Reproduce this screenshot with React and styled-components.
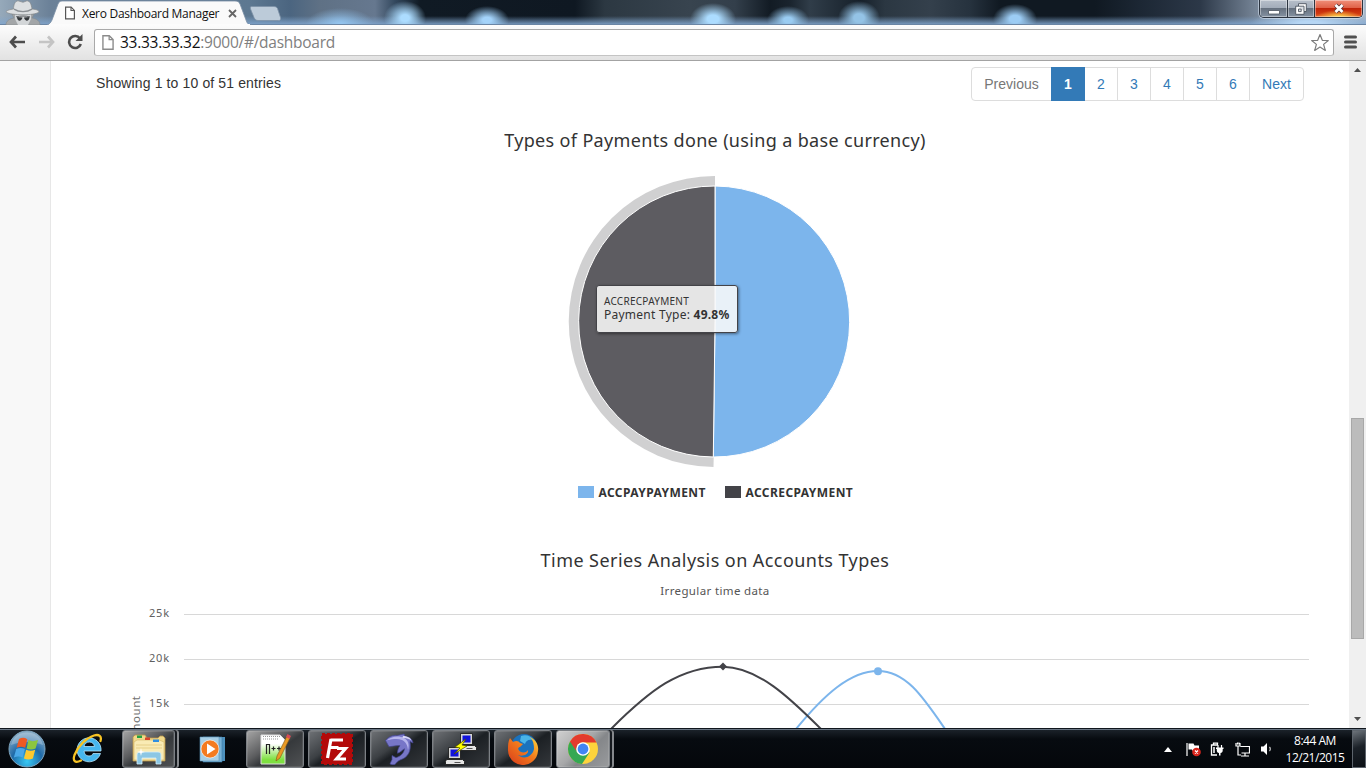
import React from "react";
import styled, { createGlobalStyle, css } from "styled-components";

const GlobalStyle = createGlobalStyle`
  * { box-sizing: border-box; }
  html, body { margin: 0; height: 100%; overflow: hidden; background: #fff; }
  svg { display: block; flex: none; }
`;

const chartFont = `"Noto Sans", "Open Sans", sans-serif`;
const systemFont = `"Open Sans", "Noto Sans", sans-serif`;

const Screen = styled.div`
  display: grid;
  grid-template-rows: 25px 36px 667px 40px;
  width: 1366px;
  height: 768px;
  overflow: hidden;
`;

/* ---------- Title bar ---------- */

const TitleBar = styled.header`
  display: flex;
  align-items: flex-start;
  overflow: hidden;
  box-shadow: inset 0 -1px 0 #6b86a5;
  background:
    radial-gradient(ellipse 21px 17px at 405px 18px, #acdcff 20%, rgba(172, 220, 255, 0.6) 55%, transparent 100%),
    radial-gradient(ellipse 22px 14px at 487px 20px, #a4d3fa 20%, rgba(160, 208, 248, 0.6) 55%, transparent 100%),
    radial-gradient(ellipse 23px 16px at 713px 19px, #acdcff 25%, rgba(172, 220, 255, 0.6) 55%, transparent 100%),
    radial-gradient(ellipse 21px 14px at 788px 20px, #9accf2 20%, rgba(154, 204, 242, 0.55) 55%, transparent 100%),
    radial-gradient(ellipse 21px 17px at 859px 18px, #94c3e6 25%, rgba(148, 195, 230, 0.6) 55%, transparent 100%),
    radial-gradient(ellipse 22px 15px at 1015px 19px, #9cccf4 25%, rgba(156, 204, 244, 0.6) 55%, transparent 100%),
    radial-gradient(ellipse 34px 16px at 340px 24px, #93c4ee 5%, transparent 100%),
    radial-gradient(ellipse 60px 14px at 1310px 24px, #b6d6f4 20%, transparent 100%),
    linear-gradient(to bottom, transparent 16px, rgba(128, 165, 205, 0.85) 24px),
    linear-gradient(to right, #96a9ba 0, #6b8198 50px, #5d7891 250px, #4b6580 290px, #5f7185 320px,
      #66788f 375px, #33485e 395px, #101a24 420px, #0f1822 575px, #2c3842 605px, #38444f 690px,
      #333f4b 735px, #121b24 770px, #1a242e 790px, #303d49 810px, #16202a 860px, #2b3742 885px,
      #34404c 930px, #26323e 970px, #101922 1000px, #101922 1095px, #1c2734 1140px, #2c3848 1200px, #7b8a9c 1260px,
      #a9b9ca 1366px);
`;

const Incognito = styled.div`
  width: 47px;
  padding-left: 5px;
`;

const Tab = styled.div`
  position: relative;
  width: 205px;
  height: 25px;
  padding: 6px 0 0 18px;
  display: flex;
  align-items: flex-start;
`;

const TabShape = styled.svg`
  position: absolute;
  inset: 0;
`;

const TabIcon = styled.span`
  position: relative;
  margin-top: ${(p) => p.$drop || 0}px;
`;

const TabLabel = styled.span`
  position: relative;
  flex: none;
  width: 153px;
  padding-left: 7px;
  font: 12px/15px ${systemFont};
  letter-spacing: -0.29px;
  white-space: nowrap;
  color: #111;
`;

const NewTab = styled.svg`
  margin: 6px 0 0 -3px;
`;

const WindowControls = styled.div`
  display: flex;
  height: 18px;
  margin: 0 3px 0 auto;
  border: 1px solid #2b3440;
  border-top: 0;
  border-radius: 0 0 5px 5px;
  box-shadow: 0 0 0 1px rgba(220, 232, 245, 0.55), 24px 0 8px -18px #ff6a4d;
  overflow: hidden;
`;

const WindowButton = styled.div`
  width: ${(p) => p.$w}px;
  display: grid;
  place-items: center;
  border-left: ${(p) => (p.$first ? 0 : "1px solid #2b3440")};
  box-shadow: inset 0 0 0 1px rgba(255, 255, 255, 0.4);
  background: ${(p) =>
    p.$danger
      ? "radial-gradient(ellipse 22px 7px at 50% 100%, #ffd94e, transparent), linear-gradient(#f0907a 0, #e06248 45%, #c02408 50%, #d03a12 80%, #ea6a2c 100%)"
      : "linear-gradient(#b7bfca 0, #a3adba 45%, #66717f 50%, #8592a2 100%)"};
`;

/* ---------- Toolbar ---------- */

const Toolbar = styled.nav`
  display: flex;
  align-items: center;
  padding: 0 8px 1px 8px;
  background: linear-gradient(#fcfcfc, #e2e2e2);
  border-bottom: 1px solid #a3a3a3;
`;

const NavIcon = styled.svg`
  margin-right: ${(p) => p.$gap}px;
`;

const AddressBar = styled.div`
  display: flex;
  align-items: center;
  width: 1240px;
  height: 27px;
  padding: 0 3px 0 7px;
  background: #fff;
  border: 1px solid #a9a9a9;
  border-bottom-color: #c4c4c4;
  border-radius: 3px;
`;

const Url = styled.span`
  flex: 1;
  padding-left: 6px;
  font: 15.5px/24px ${systemFont};
  letter-spacing: -0.26px;
  color: #808080;
  b { font-weight: 400; color: #111; }
`;

/* ---------- Page ---------- */

const Viewport = styled.div`
  display: grid;
  grid-template-columns: 51px 1298px 17px;
  min-height: 0;
  overflow: hidden;
`;

const SideGutter = styled.aside`
  background: #f8f8f8;
  border-right: 1px solid #e7e7e7;
`;

const Main = styled.main`
  overflow: hidden;
  min-width: 0;
`;

const TableFooter = styled.div`
  display: flex;
  justify-content: space-between;
  height: 68px;
  padding: 6px 45px 0;
  font: 14px/20px "Liberation Sans", Arial, sans-serif;
  color: #333;
`;

const EntryInfo = styled.div`
  padding-top: 6px;
  letter-spacing: 0.13px;
`;

const Pager = styled.div`
  display: flex;
  height: 34px;
`;

const PageLink = styled.a`
  flex: none;
  width: ${(p) => p.$w}px;
  padding: 6px 0;
  margin-left: -1px;
  border: 1px solid #ddd;
  text-align: center;
  white-space: nowrap;
  color: ${(p) => (p.$muted ? "#777" : "#337ab7")};
  &:first-child { border-radius: 4px 0 0 4px; margin-left: 0; }
  &:last-child { border-radius: 0 4px 4px 0; }
  ${(p) =>
    p.$active &&
    css`
      position: relative;
      background: #337ab7;
      border-color: #337ab7;
      color: #fff;
      font-weight: 700;
    `}
`;

const ChartPanel = styled.section`
  position: relative;
  display: flex;
  flex-direction: column;
  align-items: center;
  width: 1228px;
  margin-left: 50px;
  height: ${(p) => p.$h}px;
  font-family: ${chartFont};
`;

const ChartTitle = styled.h2`
  margin: 0;
  font-size: 18px;
  font-weight: 400;
  line-height: 22px;
  letter-spacing: ${(p) => p.$spacing}px;
  color: #333;
  white-space: nowrap;
`;

const ChartSubtitle = styled.div`
  margin-top: 13px;
  font-size: 11.5px;
  line-height: 14px;
  letter-spacing: 0.36px;
  color: #555;
`;

const PieArea = styled.div`
  margin-top: 19px;
  width: 300px;
  height: 300px;
`;

const Tooltip = styled.div`
  position: absolute;
  left: 495px;
  top: 156px;
  width: 142px;
  height: 48px;
  padding: 9px 7px;
  border: 1px solid #434348;
  border-radius: 3px;
  background: rgba(249, 249, 249, 0.87);
  box-shadow: 1px 1px 3px rgba(0, 0, 0, 0.45);
  font-size: 12px;
  line-height: 14px;
  letter-spacing: 0.25px;
  color: #333;
  white-space: nowrap;
  small { display: block; font-size: 10px; line-height: 13px; letter-spacing: 0.27px; }
`;

const Legend = styled.div`
  display: flex;
  gap: 19px;
  margin-top: 13px;
`;

const LegendItem = styled.div`
  display: flex;
  align-items: center;
  gap: 5px;
  width: 128px;
  height: 18px;
  font-size: 12px;
  font-weight: 700;
  letter-spacing: 0.42px;
  white-space: nowrap;
  color: #333;
  &::before {
    content: "";
    flex: none;
    width: 16px;
    height: 12px;
    background: ${(p) => p.$color};
  }
`;

const SeriesArea = styled.div`
  width: 1228px;
  height: 130px;
`;

const ScrollBar = styled.div`
  display: flex;
  flex-direction: column;
  align-items: center;
  padding: 7px 0 0;
  background: #f0f0f0;
`;

const Thumb = styled.div`
  width: 13px;
  height: 221px;
  margin: 346px 0 78px;
  background: #bcbcbc;
  border: 1px solid #a8a8a8;
`;

/* ---------- Taskbar ---------- */

const TaskBar = styled.footer`
  display: flex;
  align-items: center;
  padding-top: 1px;
  border-top: 1px solid #10161d;
  box-shadow: inset 0 1px 0 #6a7684;
  background: linear-gradient(to bottom, #1d242c, #070b10 10px, #04070b);
`;

const Launcher = styled.div`
  display: grid;
  place-items: center;
  width: ${(p) => p.$w}px;
  height: 38px;
`;

const TaskButton = styled.div`
  display: grid;
  place-items: center;
  width: ${(p) => p.$w || 58}px;
  height: 38px;
  margin-right: 4px;
  border: 1px solid #7c8085;
  border-radius: 3px;
  box-shadow: ${(p) => (p.$stacked ? "2px 0 0 #15191e, 4px 0 0 #85888c, inset 0 0 0 1px rgba(255,255,255,.12)" : "inset 0 0 0 1px rgba(255,255,255,.1)")};
  background: ${(p) =>
    p.$tone === "active"
      ? "linear-gradient(135deg, #d0d0d0 0, #a6a7a8 45%, #85878a 60%, #999b9d 100%)"
      : p.$tone === "light"
      ? "linear-gradient(145deg, #a5a5a5 0, #5c5d5f 40%, #36393c 55%, #505254 100%)"
      : "linear-gradient(145deg, #6f7276 0, #3c4044 40%, #1c2024 52%, #34373b 100%)"};
`;

const Tray = styled.div`
  display: flex;
  align-items: center;
  margin-left: auto;
  height: 38px;
`;

const TrayIcon = styled.svg`
  margin-right: ${(p) => p.$gap}px;
`;

const Clock = styled.div`
  width: 64px;
  margin-right: 5px;
  text-align: center;
  font: 12px/17px ${systemFont};
  letter-spacing: -0.48px;
  color: #fff;
`;

const ShowDesktop = styled.div`
  width: 14px;
  height: 38px;
  border: 1px solid #5d646c;
  background: linear-gradient(160deg, #6c737a, #1b2128 45%, #0c1015);
`;

/* ---------- Drawings ---------- */

const PageGlyph = ({ w = 10, h = 13, color = "#555" }) => (
  <svg width={w} height={h} viewBox="0 0 10 13">
    <path d="M.6.6h5.500l3.300 3.300v8.500H.6z" fill="#fff" stroke={color} strokeWidth="1.200" />
    <path d="M6 .8V4h3.300" fill="none" stroke={color} strokeWidth="1.100" />
  </svg>
);

const SpyIcon = () => (
  <svg width="36" height="25" viewBox="0 0 36 25">
    <path d="M1 25c0-4 3-6 8-7l-2-4h22l-2 4c5 1 8 3 8 7z" fill="#a3a6a8" stroke="#85898c" strokeWidth=".6" />
    <path d="M10 12h16v7l-3 6H13l-3-6z" fill="#d3d6d8" />
    <path d="M8.500 9C8.500 5 10 1 13 .8l5 1.500 4-1.500c3 0 4.500 4 5 8.200 5 .5 7 1.600 7 3-3 2-8 2.700-16 2.700S4 14 1 12c0-1.400 4-2.500 7.500-3z" fill="#dcdfe1" stroke="#85898c" strokeWidth=".7" />
    <path d="M9 9.200c5 3.200 13 3.200 18 0" stroke="#8b9094" strokeWidth="1.400" fill="none" />
    <path d="M11 16.800c5-1 9-1 14 0" stroke="#45494c" strokeWidth=".8" fill="none" />
    <path d="M12 17c0 4.500 4.500 5 5.500.5zM19 17.500c1 4.500 5.500 4 5.500-.5z" fill="#34383b" />
  </svg>
);

const StartOrb = () => (
  <svg width="40" height="38" viewBox="0 0 40 38">
    <defs>
      <radialGradient id="orb" cx=".5" cy=".85" r=".85">
        <stop offset="0" stopColor="#37c8f4" />
        <stop offset=".5" stopColor="#1f6aa8" />
        <stop offset="1" stopColor="#8fb0c8" />
      </radialGradient>
    </defs>
    <circle cx="20" cy="19" r="18" fill="url(#orb)" stroke="#7fa6bf" strokeWidth="1" />
    <path d="M4 15C6 6 13 2.500 20 2.500S34 6 36 15c-10-4-22-4-32 0z" fill="#fff" opacity=".25" />
    <path d="M12 9c3-1.700 5.800-1.400 8.300.2l-2.100 8.600c-2.700-1.400-5.300-1.600-8.600-.1z" fill="#ee5a24" />
    <path d="M21.500 10c2.700 1.500 5.500 1.600 9.500 0l-2.400 8.500c-3.200 1.400-6.300 1.300-9-.1z" fill="#8cc63f" />
    <path d="M9.200 19c3.200-1.500 5.900-1.300 8.700.1l-2.300 8.500c-2.500-1.500-5.400-1.600-8.700-.1z" fill="#4aa8e8" />
    <path d="M19.200 19.700c2.800 1.400 5.800 1.500 9 .1l-2.300 8.700c-3.200 1.400-6.200 1.300-9-.1z" fill="#fdc92e" />
  </svg>
);

const ExplorerE = () => (
  <svg width="32" height="32" viewBox="0 0 32 32">
    <path d="M28.500 20.500a12 12 0 1 1 .5-5V18H12c.2 3 2 5 5 5 2 0 3.400-.8 4-2.500z M12 13.500h10.500c-.4-2.700-2.300-4.500-5.200-4.500S12.400 10.800 12 13.500z" fill="#47b7ee" stroke="#b4e5fb" strokeWidth=".8" fillRule="evenodd" />
    <path d="M28.500 8C30 3 27 1 22 2.500 14 5 6 13 2.500 22 .5 28 3 30.500 9 27.500" fill="none" stroke="#f7c324" strokeWidth="2.300" strokeLinecap="round" />
  </svg>
);

const FolderIcon = () => (
  <svg width="34" height="32" viewBox="0 0 34 32">
    <path d="M1 28V4l2-2h10l2 3h11l2-2h3l2 2v23z" fill="#f1d98a" stroke="#b9964a" strokeWidth=".8" />
    <path d="M2 9l3-2h22l5 2v18H2z" fill="#f9ebb4" stroke="#d1b365" strokeWidth=".6" />
    <path d="M5 2.500h5v2.500H5z" fill="#23a043" /><path d="M13 4.500h5V7h-5z" fill="#d6442c" /><path d="M21 6.500h6V9h-6z" fill="#2f8fe0" />
    <path d="M4 12h26M4 15h26" stroke="#e6cf88" />
    <path d="M5 31v-9c0-2 1-3 3-3h18c2 0 3 1 3 3v9h-5v-6H10v6z" fill="#8cc7e4" stroke="#d6effa" strokeWidth=".8" />
    <path d="M9 15l.8 3.200L13 19l-3.200.8L9 23l-.8-3.200L5 19l3.200-.8z" fill="#fff" />
  </svg>
);

const MediaIcon = () => (
  <svg width="27" height="27" viewBox="0 0 27 27">
    <path d="M7 1h19v24H7z" fill="#4d91bd" /><path d="M4 1h19v25H4z" fill="#77b2d6" stroke="#3d7ba5" strokeWidth=".6" />
    <path d="M1 1h19v24H1z" fill="#a7cfe6" stroke="#5a95b9" strokeWidth=".6" />
    <circle cx="11" cy="13" r="9" fill="#f47b20" stroke="#fff" strokeWidth=".6" />
    <path d="M8 7.500v11l8.500-5.500z" fill="#fff" />
  </svg>
);

const NotepadIcon = () => (
  <svg width="32" height="32" viewBox="0 0 32 32">
    <defs><linearGradient id="npp" x2="0" y2="1"><stop offset=".3" stopColor="#fff" /><stop offset=".85" stopColor="#7ee040" /></linearGradient></defs>
    <path d="M2 2h19l5 5v24H2z" fill="url(#npp)" stroke="#ddd" />
    <path d="M4 3.500h17M4 6h15" stroke="#999" strokeDasharray="1 1" />
    <path d="M7.500 21v-9.500h3V21M12.500 15.500h4M14.500 13.500v4M18 15.500h4M20 13.500v4" fill="none" stroke="#222" strokeWidth="1.200" />
    <path d="M28 3l3 2-10 20-4 3 1-5z" fill="#e99a25" stroke="#7e5415" strokeWidth=".6" /><path d="M27 4l1.500-3L32 3l-1.500 3z" fill="#d84b55" />
  </svg>
);

const FileZillaIcon = () => (
  <svg width="32" height="32" viewBox="0 0 32 32">
    <path d="M1 1h30v30H1z" fill="#b30a0a" stroke="#b30a0a" strokeWidth="2" strokeDasharray="3 2" />
    <path d="M9.500 7H22M10 6L6.500 25M9 14.500h8.500M16 15.500h8.500l-9 10.500H25" fill="none" stroke="#fff" strokeWidth="3.200" />
  </svg>
);

const DolphinIcon = () => (
  <svg width="32" height="32" viewBox="0 0 32 32">
    <path d="M2.500 7.500C6 3 10 2 14 2.500L21 1l1 2.500c5 .5 7.500 3 8 6.500l-3-1.500c1.500 10-2 16-10 18.500-2 1-3.500 2.500-5 4.500-2 .5-4 .3-5-.8l2-4.200 0-4 4 2.200c5-1.500 8-5 8.500-9-2.500 1.500-4.500 4-7 4.500 0-3 1-6 2.500-7.500-4-.5-7 .8-11 1z" fill="#7776c8" stroke="#44458f" strokeWidth=".7" />
    <path d="M4 7.300C9 3 16 2.600 21 5c4.500 2.500 5.500 7 4 12-.5-5-2-8-6-10-4-1.500-9-1-15 .3z" fill="#b6b5ed" />
    <path d="M20 3c4 0 7.500 1.500 8.500 4.500-3-2-6-2.500-9-2.500z" fill="#d7d6f6" />
  </svg>
);

const Monitor = ({ x, y }) => (
  <g transform={`translate(${x} ${y})`}>
    <path d="M3 0h12v11H3z" fill="#d5d5d5" stroke="#111" strokeWidth=".8" /><path d="M5 2h8v7H5z" fill="#1212dd" />
    <path d="M1 12h16l2 2v3H0v-3z" fill="#e5e5e5" stroke="#111" strokeWidth=".8" /><path d="M9 15h6" stroke="#555" />
  </g>
);

const PuttyIcon = () => (
  <svg width="32" height="32" viewBox="0 0 32 32">
    <Monitor x={12.5} y={0.5} /><Monitor x={0.5} y={14.5} />
    <path d="M21 6L10 14l5 1-6 6 13-8-5-1z" fill="#ff0" stroke="#4b4b00" strokeWidth=".7" />
  </svg>
);

const FirefoxIcon = () => (
  <svg width="32" height="32" viewBox="0 0 32 32">
    <defs><linearGradient id="fx" x1="0" y1="1" x2="1" y2="0"><stop offset="0" stopColor="#d83a1c" /><stop offset=".55" stopColor="#f27a1c" /><stop offset="1" stopColor="#ffd83a" /></linearGradient></defs>
    <circle cx="17" cy="14" r="13" fill="#1b72bd" /><path d="M14 3c5-2 10 0 12 4-5-1-7 1-8 4l-5-3z" fill="#49b4e8" />
    <path d="M3 5l3 4c3-2 6-1 7 1l3 1-3 3c-3 1-2 3 1 5 3 1 6 0 7-2 1 6-9 7-11 4 5 6 15 4 17-5 0-5-1-9-4-12 6 3 9 8 8 14a15 15 0 0 1-30-2C1 12 1 9 3 5z" fill="url(#fx)" />
  </svg>
);

const ChromeIcon = () => (
  <svg width="32" height="32" viewBox="0 0 32 32">
    <circle cx="16" cy="16" r="15" fill="#fdd33c" />
    <path d="M16 16L3 8.500A15 15 0 0 0 15 31l7.500-11.500z" fill="#35a853" />
    <path d="M3 8.500A15 15 0 0 1 29.500 9.500H16A6.500 6.500 0 0 0 10 19z" fill="#e33b2e" />
    <circle cx="16" cy="16" r="6.800" fill="#fff" /><circle cx="16" cy="16" r="5.400" fill="#4285f4" />
  </svg>
);

const PieChart = () => (
  <svg width="300" height="300" viewBox="564.500 170 300 300">
    <path d="M714.500 176A145.500 145.500 0 0 0 713 467L713.200 457A135.500 135.500 0 0 1 714.500 186z" fill="#434348" fillOpacity=".25" />
    <path d="M714.500 321.500V186a135.500 135.500 0 1 1-1.700 271z" fill="#7cb5ec" stroke="#fff" />
    <path d="M714.500 321.500L712.800 457A135.500 135.500 0 0 1 714.500 186z" fill="#5d5c61" stroke="#fff" />
  </svg>
);

const axisTicks = [
  { label: "25k", y: 614.5 },
  { label: "20k", y: 659.5 },
  { label: "15k", y: 704.5 },
];

const SeriesChart = () => (
  <svg width="1228" height="130" viewBox="101 598 1228 130" fontFamily={chartFont}>
    {axisTicks.map((t) => (
      <g key={t.label}>
        <path d={`M184 ${t.y}h1125`} stroke="#d8d8d8" />
        <text x="149" y={t.y + 2.5} fontSize="11" fill="#606060" textLength="20">{t.label}</text>
      </g>
    ))}
    <text transform="translate(139.500 742) rotate(-90)" fontSize="11.500" fill="#707070" textLength="46">Amount</text>
    <g fill="none" strokeWidth="2">
      <path d="M796 729C824 695 850 671 878 671S923 697 945 729" stroke="#7cb5ec" />
      <path d="M611 729C650 690 680 666.700 723 666.700C758 667 790 698 821 729" stroke="#434348" />
    </g>
    <circle cx="878" cy="671.200" r="4" fill="#7cb5ec" />
    <path d="M723 662.500l4 4-4 4-4-4z" fill="#434348" />
  </svg>
);

const pages = [
  { label: "Previous", width: 81 },
  ...["1", "2", "3", "4", "5", "6"].map((label) => ({ label, width: 34 })),
  { label: "Next", width: 55 },
];

export default function App() {
  return (
    <Screen>
      <GlobalStyle />
      <TitleBar>
        <Incognito><SpyIcon /></Incognito>
        <Tab>
          <TabShape width="205" height="25" viewBox="0 0 205 25">
            <path d="M0 25c3-1 4-3 5-5L11 4c1-2 2-3 4-3h173c3 0 4 1 5 3l6 16c1 3 2 5 6 5z" fill="#fafafa" stroke="#7a8ea5" strokeWidth=".8" />
            <path d="M2 24.500h201" stroke="#fcfcfc" />
          </TabShape>
          <TabIcon><PageGlyph h={14} w={10} /></TabIcon>
          <TabLabel>Xero Dashboard Manager</TabLabel>
          <TabIcon $drop={3}>
            <svg width="9" height="9" viewBox="0 0 9 9"><path d="M1 1l7 7M8 1L1 8" stroke="#666" strokeWidth="1.800" /></svg>
          </TabIcon>
        </Tab>
        <NewTab width="32" height="15" viewBox="0 0 32 15">
          <path d="M3 .5h22c2 0 3 1 3.500 2l3 9c.5 2 0 3-2 3H9c-2 0-3-1-4-3L1.500 3C1 1 1.500.5 3 .5z" fill="#bccbd9" stroke="#7c91a6" strokeWidth=".8" />
        </NewTab>
        <WindowControls>
          <WindowButton $w={27} $first>
            <svg width="12" height="12"><path d="M.5 7.500h11v3.500H.5z" fill="#fff" stroke="#4c5560" strokeWidth=".8" /></svg>
          </WindowButton>
          <WindowButton $w={27}>
            <svg width="12" height="12" viewBox="0 0 12 12"><path d="M3.500.7h7.800v7.800H9v2.800H.7V3.200h2.800z" fill="#fff" stroke="#4c5560" strokeWidth=".9" /><path d="M3.500 3.200H9v5.300M3.500 6h2.700v2.600H3.500z" fill="#8c98a8" fillOpacity=".3" stroke="#4c5560" strokeWidth=".9" /></svg>
          </WindowButton>
          <WindowButton $w={48} $danger>
            <svg width="12" height="11" viewBox="0 0 12 11"><path d="M2.500 2l7 7M9.500 2l-7 7" stroke="#54353a" strokeWidth="4.200" /><path d="M2.500 2l7 7M9.500 2l-7 7" stroke="#fff" strokeWidth="2.700" /></svg>
          </WindowButton>
        </WindowControls>
      </TitleBar>

      <Toolbar>
        <NavIcon $gap={13} width="18" height="14" viewBox="0 0 18 14"><path d="M8 1.500L3 7l5 5.500M3 7h14" fill="none" stroke="#4d4d4d" strokeWidth="2.700" /></NavIcon>
        <NavIcon $gap={12} width="16" height="14" viewBox="0 0 16 14"><path d="M9 1.500L14 7l-5 5.500M14 7H0" fill="none" stroke="#c4c4c4" strokeWidth="2.700" /></NavIcon>
        <NavIcon $gap={11} width="16" height="16" viewBox="0 0 16 16"><path d="M13 4.500A6 6 0 1 0 13.800 10" fill="none" stroke="#4d4d4d" strokeWidth="2.600" /><path d="M15.500 0v7H8.500z" fill="#4d4d4d" /></NavIcon>
        <AddressBar>
          <PageGlyph w={12} h={15} color="#8b8b8b" />
          <Url><b>33.33.33.32</b>:9000/#/dashboard</Url>
          <svg width="20" height="19" viewBox="0 0 20 19"><path d="M10 1.500l2.300 5.800 6 .2-4.700 3.900 1.700 6-5.300-3.300-5.300 3.300 1.700-6L1.700 7.500l6-.2z" fill="#fff" stroke="#7c7c7c" strokeWidth="1.200" strokeLinejoin="round" /></svg>
        </AddressBar>
        <svg width="24" height="14" viewBox="0 0 24 14"><path d="M11.500 2h10M11.500 7h10M11.500 12h10" stroke="#505050" strokeWidth="3" strokeLinecap="round" /></svg>
      </Toolbar>

      <Viewport>
        <SideGutter />
        <Main>
          <TableFooter>
            <EntryInfo>Showing 1 to 10 of 51 entries</EntryInfo>
            <Pager>
              {pages.map((p) => (
                <PageLink key={p.label} $w={p.width} $active={p.label === "1"} $muted={p.label === "Previous"}>{p.label}</PageLink>
              ))}
            </Pager>
          </TableFooter>
          <ChartPanel $h={420}>
            <ChartTitle $spacing={0.34}>Types of Payments done (using a base currency)</ChartTitle>
            <PieArea><PieChart /></PieArea>
            <Tooltip><small>ACCRECPAYMENT</small>Payment Type: <b>49.8%</b></Tooltip>
            <Legend>
              <LegendItem $color="#7cb5ec">ACCPAYPAYMENT</LegendItem>
              <LegendItem $color="#434348">ACCRECPAYMENT</LegendItem>
            </Legend>
          </ChartPanel>
          <ChartPanel $h={400}>
            <ChartTitle $spacing={0.44}>Time Series Analysis on Accounts Types</ChartTitle>
            <ChartSubtitle>Irregular time data</ChartSubtitle>
            <SeriesArea><SeriesChart /></SeriesArea>
          </ChartPanel>
        </Main>
        <ScrollBar>
          <svg width="7" height="4"><path d="M0 4l3.500-4L7 4z" fill="#505050" /></svg>
          <Thumb />
          <svg width="7" height="4"><path d="M0 0h7L3.500 4z" fill="#505050" /></svg>
        </ScrollBar>
      </Viewport>

      <TaskBar>
        <Launcher $w={54}><StartOrb /></Launcher>
        <Launcher $w={68}><ExplorerE /></Launcher>
        <TaskButton $w={53} $stacked $tone="light"><FolderIcon /></TaskButton>
        <Launcher $w={67}><MediaIcon /></Launcher>
        <TaskButton $tone="light"><NotepadIcon /></TaskButton>
        <TaskButton><FileZillaIcon /></TaskButton>
        <TaskButton><DolphinIcon /></TaskButton>
        <TaskButton><PuttyIcon /></TaskButton>
        <TaskButton><FirefoxIcon /></TaskButton>
        <TaskButton $w={54} $stacked $tone="active"><ChromeIcon /></TaskButton>
        <Tray>
          <TrayIcon $gap={14} width="8" height="5"><path d="M0 5l4-5 4 5z" fill="#fff" /></TrayIcon>
          <TrayIcon $gap={9} width="15" height="15" viewBox="0 0 15 15"><path d="M1 1v13" stroke="#fff" strokeWidth="1.200" /><path d="M2.500 1.500h5l1 2H13v6H7l-1-2H2.500z" fill="#fff" /><circle cx="10.500" cy="10" r="4.300" fill="#d9251d" /><path d="M9 8.500l3 3M12 8.500l-3 3" stroke="#fff" strokeWidth="1.200" /></TrayIcon>
          <TrayIcon $gap={11} width="14" height="15" viewBox="0 0 14 15"><path d="M7 13H1.500V3H8M3.500 2.500V1.200h4v1.300" fill="none" stroke="#fff" strokeWidth="1.300" /><path d="M4 5v6" stroke="#fff" strokeWidth="1.500" /><path d="M6 5.500h7.500v1.500h-.8v1.500c0 1.500-.8 2.300-2.200 2.500v2.500H9V11c-1.400-.2-2.200-1-2.200-2.500V7H6z" fill="#fff" /><path d="M8 3v3M11.500 3v3" stroke="#fff" strokeWidth="1.200" /></TrayIcon>
          <TrayIcon $gap={10} width="15" height="15" viewBox="0 0 15 15"><path d="M5.500 4.500h9v6.500h-8M10 11v3M6 14h8M1 1v3h4V1M3 4v9h3M2.500.5v2M4 .5v2" fill="none" stroke="#fff" strokeWidth="1.200" /></TrayIcon>
          <TrayIcon $gap={9} width="14" height="14" viewBox="0 0 14 14"><path d="M1 4.500h2.500L7 1v12L3.500 9.500H1z" fill="#fff" /><path d="M9.500 5c1 1 1 3 0 4" stroke="#ddd" fill="none" strokeWidth="1.100" /></TrayIcon>
          <Clock>8:44 AM<br />12/21/2015</Clock>
          <ShowDesktop />
        </Tray>
      </TaskBar>
    </Screen>
  );
}
